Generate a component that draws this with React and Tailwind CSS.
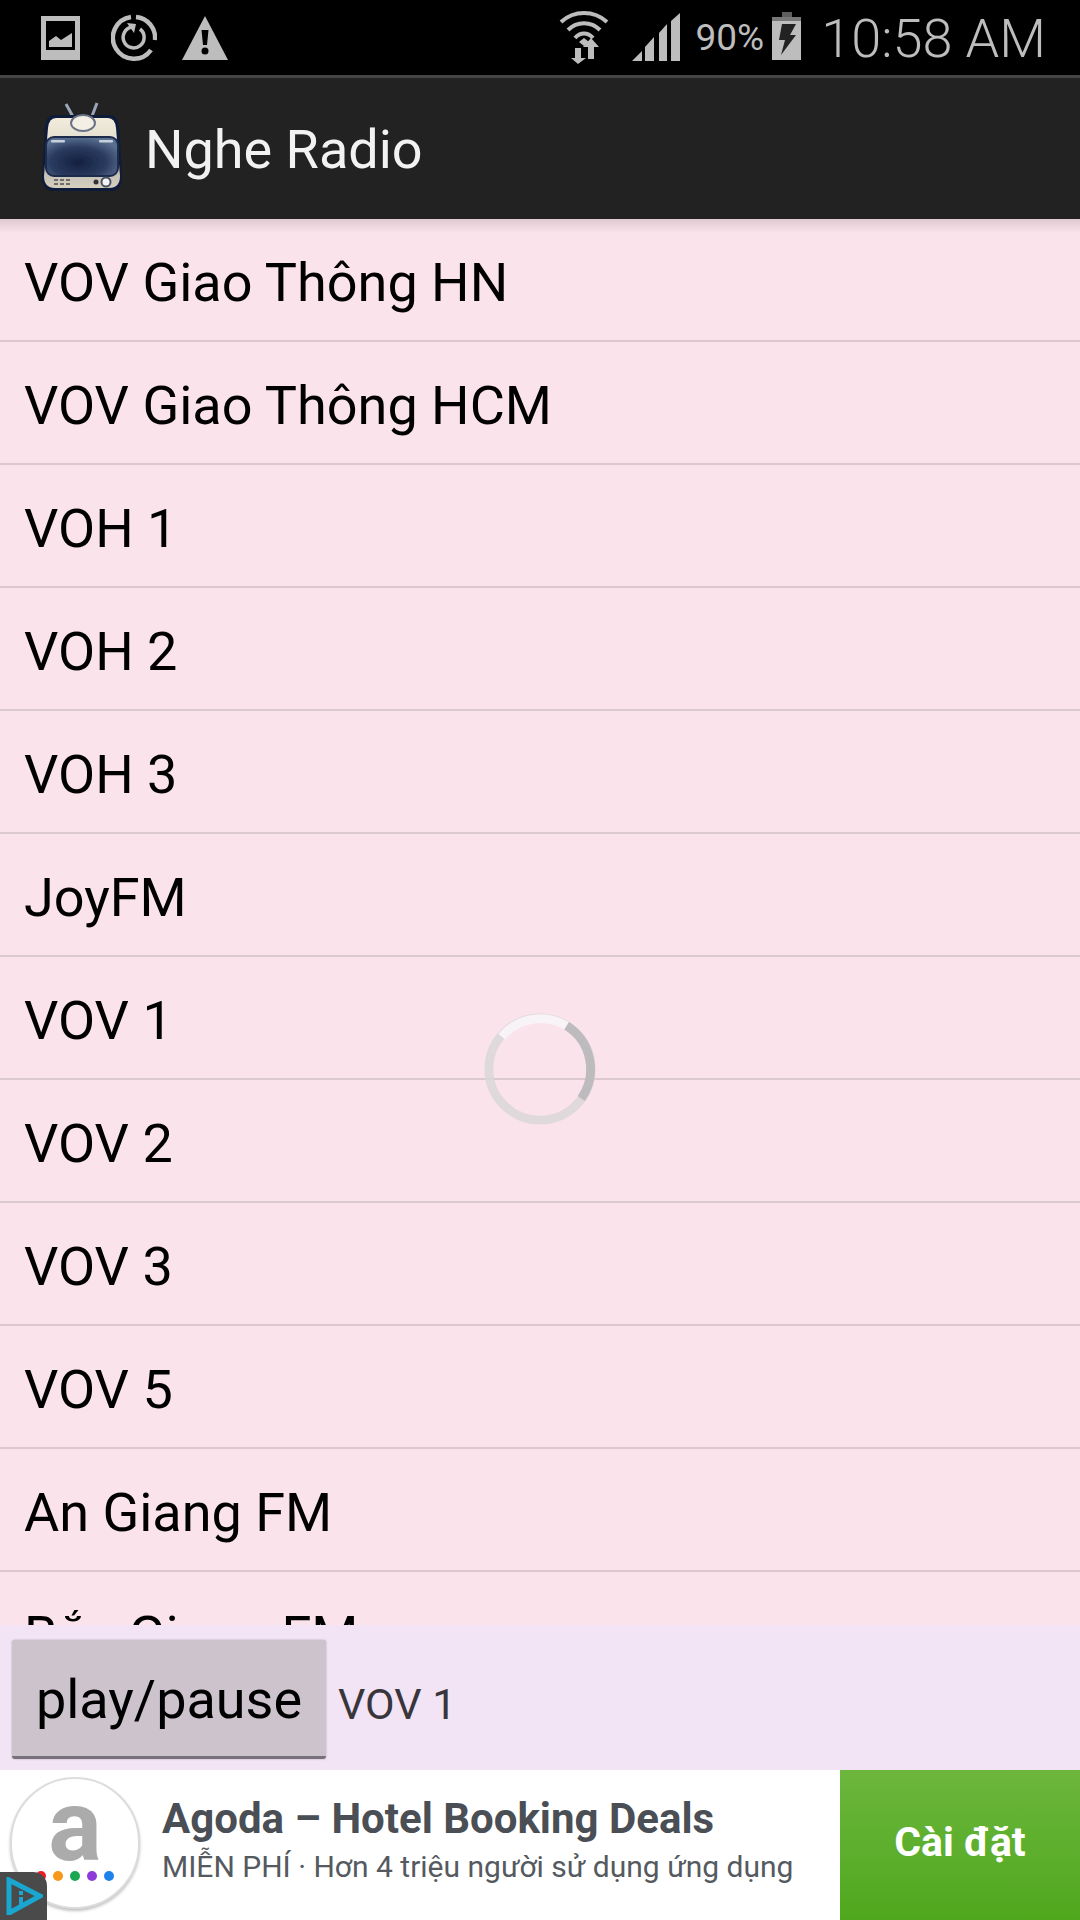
import React from "react";

const stations = [
  "VOV Giao Thông HN",
  "VOV Giao Thông HCM",
  "VOH 1",
  "VOH 2",
  "VOH 3",
  "JoyFM",
  "VOV 1",
  "VOV 2",
  "VOV 3",
  "VOV 5",
  "An Giang FM",
  "Bắc Giang FM",
];

function ImageIcon() {
  return (
    <svg width="40" height="44" viewBox="0 0 40 44">
      <path fill="#bdbdbd" fillRule="evenodd" d="M0 0h39v44H0zM5 5v29h29V5z" />
      <path fill="#bdbdbd" d="M8 31v-6l7-5 5 4 11-7v14z" />
    </svg>
  );
}

function SyncIcon() {
  return (
    <svg width="46" height="48" viewBox="0 0 46 48" fill="none" stroke="#bdbdbd">
      <path strokeWidth="4.500" d="M25 3A21 21 0 0 1 44 26" />
      <path strokeWidth="4.500" d="M40 36A21 21 0 1 1 20 3" />
      <path strokeWidth="3.500" d="M29 15a10.500 10.500 0 1 1-8-2" />
      <path fill="#bdbdbd" stroke="none" d="M16 9l9 1-2 9z" />
    </svg>
  );
}

function WarningIcon() {
  return (
    <svg width="46" height="44" viewBox="0 0 46 44">
      <path fill="#bdbdbd" d="M23 0l23 44H0z" />
      <path fill="#000" d="M19.500 14h7l-1.500 15h-4z" />
      <circle cx="23" cy="35" r="3.500" fill="#000" />
    </svg>
  );
}

function WifiIcon() {
  return (
    <svg width="50" height="54" viewBox="0 0 50 54" fill="none">
      <path stroke="#bdbdbd" strokeWidth="4" d="M2 12C15 0 35 0 48 12" />
      <path stroke="#bdbdbd" strokeWidth="4" d="M9 20C18 11 32 11 41 20" />
      <path stroke="#bdbdbd" strokeWidth="4" d="M16 28C21 22 29 22 34 28" />
      <path fill="#bdbdbd" d="M20 32l5-4 5 4-5 4z" />
      <path fill="#bdbdbd" d="M16 38h6v10h5l-8 6-7-6h4z" />
      <path fill="#bdbdbd" d="M32 28l8 9h-5v12h-6V37h-5z" />
    </svg>
  );
}

function SignalIcon() {
  return (
    <svg width="48" height="48" viewBox="0 0 48 48" fill="#bdbdbd">
      <path d="M0 48l10-10v10z" />
      <path d="M13 48V34l9-10v24z" />
      <path d="M27 48V20l8-9v37z" />
      <path d="M39 48V8l9-8v48z" />
    </svg>
  );
}

function BatteryIcon() {
  return (
    <svg width="30" height="48" viewBox="0 0 30 48">
      <rect x="10" y="0" width="10" height="6" fill="#5e5e5e" />
      <rect x="0" y="5" width="29" height="5" fill="#777" />
      <rect x="0" y="9" width="29" height="39" fill="#bdbdbd" />
      <path fill="#222" d="M10 12h14l-6 11h6L9 43l4-15H7z" />
    </svg>
  );
}

function TvIcon() {
  return (
    <svg width="82" height="92" viewBox="0 0 82 92">
      <defs>
        <linearGradient id="tvBody" x1="0" y1="0" x2="0" y2="1">
          <stop offset="0" stopColor="#f3ecdb" />
          <stop offset="0.3" stopColor="#e4dfd2" />
          <stop offset="0.5" stopColor="#a9abb3" />
          <stop offset="1" stopColor="#d6d0be" />
        </linearGradient>
        <radialGradient id="tvScreen" cx="0.45" cy="0.65" r="0.65">
          <stop offset="0" stopColor="#14203f" />
          <stop offset="0.6" stopColor="#2a3b60" />
          <stop offset="1" stopColor="#5a7090" />
        </radialGradient>
        <filter id="tvSoft">
          <feGaussianBlur stdDeviation="0.6" />
        </filter>
      </defs>
      <g filter="url(#tvSoft)">
        <path stroke="#9aa5b8" strokeWidth="3" d="M25 3l11 20M56 2L48 23" />
        <path fill="#101a3a" d="M14 14h54q9 0 10 12l3 50q0 14-12 14H13Q1 90 1 76l3-50q1-12 10-12z" />
        <path fill="url(#tvBody)" d="M15 17h52q7 0 8 10l4 48q0 12-11 12H14Q3 87 3 75l4-48q1-10 8-10z" />
        <ellipse cx="42" cy="22" rx="12" ry="8" fill="#f4efe4" stroke="#6a7286" strokeWidth="2" />
        <rect x="5" y="36" width="72" height="39" rx="8" fill="url(#tvScreen)" stroke="#1f2c4c" strokeWidth="2" />
        <rect x="10" y="39" width="14" height="2.500" rx="1" fill="#c7d0dd" />
        <rect x="58" y="39" width="14" height="2.500" rx="1" fill="#c7d0dd" />
        <g fill="#6f6d68">
          <rect x="13" y="78" width="4" height="2" />
          <rect x="19" y="78" width="4" height="2" />
          <rect x="25" y="78" width="4" height="2" />
          <rect x="13" y="82" width="4" height="2" />
          <rect x="19" y="82" width="4" height="2" />
          <rect x="25" y="82" width="4" height="2" />
        </g>
        <circle cx="55" cy="81" r="2.500" fill="#333" />
        <circle cx="65" cy="81" r="4.500" fill="#f4f4f4" stroke="#4a5264" strokeWidth="2" />
      </g>
    </svg>
  );
}

function Spinner() {
  return (
    <svg className="absolute left-[484px] top-[1012px]" width="112" height="114" viewBox="0 0 114 114" fill="none" strokeWidth="9">
      <circle cx="57" cy="57" r="52" stroke="#d9d7d9" opacity="0.85" />
      <path stroke="#bdbbbd" d="M84 13A52 52 0 0 1 99 87" />
      <path stroke="#f8f3f6" d="M18 24A52 52 0 0 1 84 13" />
    </svg>
  );
}

function AdChoices() {
  return (
    <div className="absolute bottom-0 left-0 flex h-[48px] w-[47px] items-center justify-center rounded-tr-[14px] bg-[#4a4a4a]">
      <svg width="38" height="38" viewBox="0 0 38 38" fill="none">
        <path stroke="#19a7d1" strokeWidth="5" d="M4 3v33l31-17z" />
        <rect x="14" y="14" width="4" height="4" fill="#19a7d1" />
        <rect x="14" y="20" width="4" height="9" fill="#19a7d1" />
      </svg>
    </div>
  );
}

function AppLogo() {
  return (
    <div className="relative mb-[4px] ml-[10px] flex h-[132px] w-[130px] shrink-0 flex-col items-center rounded-full border-2 border-[#dcdcdc] bg-white shadow-[0_2px_3px_rgba(0,0,0,0.25)]">
      <span className="mt-[2px] text-[100px] font-bold leading-[90px] text-[#ababab]">a</span>
      <div className="flex gap-[7px]">
        <span className="h-[10px] w-[10px] rounded-full bg-[#ee1c25]" />
        <span className="h-[10px] w-[10px] rounded-full bg-[#f7981d]" />
        <span className="h-[10px] w-[10px] rounded-full bg-[#19a851]" />
        <span className="h-[10px] w-[10px] rounded-full bg-[#8e3bd8]" />
        <span className="h-[10px] w-[10px] rounded-full bg-[#1d83ea]" />
      </div>
    </div>
  );
}

export default function App() {
  return (
    <div className="relative flex h-[1920px] w-[1080px] flex-col overflow-hidden bg-[#fbe3ec] font-['Roboto',sans-serif]">
      <div className="flex h-[75px] shrink-0 items-center bg-black pl-[41px] pr-[34px] text-[#bdbdbd]">
        <ImageIcon />
        <div className="ml-[30px]">
          <SyncIcon />
        </div>
        <div className="ml-[25px]">
          <WarningIcon />
        </div>
        <div className="mb-[2px] ml-auto">
          <WifiIcon />
        </div>
        <div className="mb-[2px] ml-[23px]">
          <SignalIcon />
        </div>
        <span className="ml-[16px] text-[37px] leading-none">90%</span>
        <div className="mb-[4px] ml-[8px]">
          <BatteryIcon />
        </div>
        <span className="ml-[19px] mt-[2px] text-[54px] font-light leading-none">10:58 AM</span>
      </div>

      <div className="flex h-[144px] shrink-0 items-center border-t-[3px] border-[#444444] bg-[#222222] pl-[41px]">
        <div className="mb-[3px]">
          <TvIcon />
        </div>
        <span className="ml-[22px] mt-[2px] text-[54px] leading-none text-[#f2f2f2]">Nghe Radio</span>
      </div>

      <div className="relative min-h-0 flex-1 overflow-hidden">
        <div className="absolute inset-x-0 top-0 h-[14px] bg-gradient-to-b from-[#e0c9d0] to-transparent" />
        {stations.map((name) => (
          <div key={name} className="flex h-[123px] items-center border-b-2 border-[#dcc9d0] pl-[24px] pt-[5px] text-[54px] text-black">
            {name}
          </div>
        ))}
      </div>

      <div className="flex h-[145px] shrink-0 items-center bg-[#f2e3f5] pl-[12px]">
        <button className="mt-[3px] h-[119px] w-[314px] rounded-[3px] border-b-[3px] border-[#77727a] bg-[#cdc3cd] pt-[4px] text-[54px] text-black shadow-[0_0_2px_rgba(0,0,0,0.3)]">
          play/pause
        </button>
        <span className="ml-[12px] mt-[14px] text-[43px] text-[#38363a]">VOV 1</span>
      </div>

      <div className="flex h-[150px] shrink-0 items-center bg-white">
        <AppLogo />
        <div className="mb-[6px] ml-[22px] min-w-0 flex-1">
          <p className="text-[42px] font-bold leading-[50px] text-[#4a4e55]">Agoda – Hotel Booking Deals</p>
          <p className="text-[30px] leading-[46px] text-[#555a60]">MIỄN PHÍ · Hơn 4 triệu người sử dụng ứng dụng</p>
        </div>
        <div className="flex h-full w-[240px] shrink-0 items-center justify-center bg-gradient-to-b from-[#6cb63c] to-[#4fa81c] pb-[4px] text-[41px] font-bold text-white">
          Cài đặt
        </div>
      </div>

      <Spinner />
      <AdChoices />
    </div>
  );
}
